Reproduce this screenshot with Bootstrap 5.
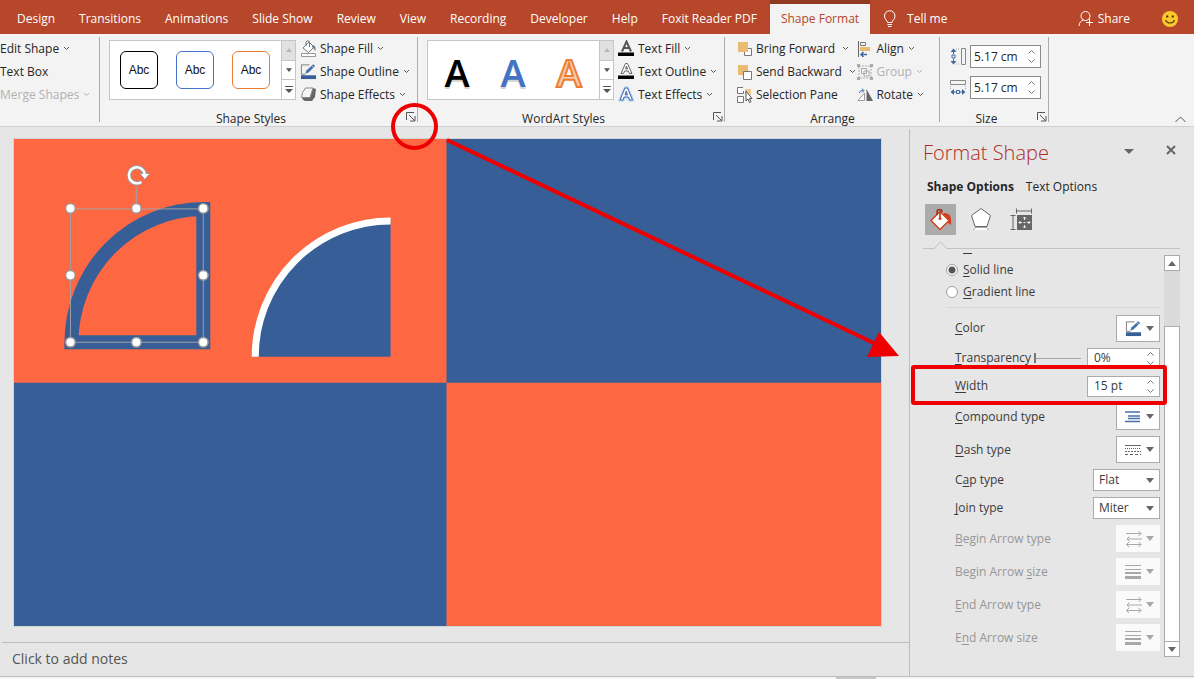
<!DOCTYPE html>
<html lang="en">
<head>
<meta charset="utf-8">
<meta name="viewport" content="width=device-width, initial-scale=1">
<title>Presentation editor</title>
<link href="https://cdn.jsdelivr.net/npm/bootstrap@5.3.0/dist/css/bootstrap.min.css" rel="stylesheet">
<script src="https://cdn.jsdelivr.net/npm/bootstrap@5.3.0/dist/js/bootstrap.bundle.min.js" defer></script>
<style>
:root { --brand: #b7472a; --ribbon: #f3f3f3; --canvas: #e6e6e6; --slide-blue: #375e97; --mark-red: #ee0000; }
body { font: 12px/16px "Open Sans", "Noto Sans", sans-serif; color: #262626; background: var(--canvas); overflow-x: hidden; }
button, input, select { font: inherit; color: inherit; }
button { background: none; border: 0; padding: 0; }
svg { display: block; flex: none; }
u { text-underline-offset: 2px; }

.tabbar { background: var(--brand); height: 34px; padding-left: 17px; }
.tabbar a, .tabbar > button { color: #fff; text-decoration: none; white-space: nowrap; padding-top: 3px; }
.tabs { gap: 24px; }
.tabs .current { background: var(--ribbon); color: var(--brand); height: 34px; border-top: 4px solid #923922; padding: 7px 11px 0; margin: 0 -9px 0 -11px; }

.ribbon { background: var(--ribbon); height: 93px; border-bottom: 1px solid #d2d0ce; position: relative; }
.group { position: relative; padding-top: 3px; }
.group::after { content: ""; position: absolute; right: 0; top: 3px; bottom: 4px; border-right: 1px solid #acacac; }
.g-insert { width: 100px; }
.g-shape { width: 318px; }
.g-word { width: 307px; }
.g-arrange { width: 215px; }
.g-size { width: 109px; }
.with-gallery { padding-left: 9px; }
.cmd { display: flex; align-items: center; height: 23px; gap: 3px; white-space: nowrap; }
.cmd svg:last-child { color: #555; }
.cmd .chev { margin-left: 1px; }
.cmd:disabled, .cmd:disabled svg:last-child { color: #b1b1b1; }
.caption { height: 22px; padding-top: 5px; text-align: center; }
.launch { position: absolute; right: 2px; bottom: 4px; }
.gallery { background: #fff; border: 1px solid #c6c6c6; width: 187px; height: 60px; margin-top: 3px; }
.gallery .items { gap: 18px; padding-left: 10px; }
.gallery .steps { width: 14px; border-left: 1px solid #c6c6c6; color: #555; }
.gallery .steps button { flex: 1; display: grid; place-items: center; }
.gallery .steps button + button { border-top: 1px solid #c6c6c6; }
.gallery .steps button:disabled { background: #e1e1e1; color: #b5b5b5; }
.swatch { width: 38px; height: 38px; border: 1px solid; border-radius: 6px; background: #fff; }
.swatch span { color: #111; font: 12px/34px "Liberation Sans", sans-serif; display: block; }
.letter { width: 38px; height: 58px; }
.letter svg { overflow: visible; }
.letter text { font-family: "Open Sans", sans-serif; font-size: 38px; font-weight: 600; text-anchor: middle; }
.spin { border: 1px solid #ababab; background: #fff; display: flex; align-items: center; }
.spin input { border: 0; background: none; min-width: 0; flex: 1; padding: 0; outline: 0; }
.size-rows { padding: 8px 0 7px 10px; gap: 8px; }
.g-size .spin { width: 71px; height: 23px; padding: 0 4px 0 3px; border-color: #8a8a8a; }
.circle-mark { position: absolute; right: -20px; top: 69px; width: 47px; height: 47px; border: 4px solid var(--mark-red); border-radius: 50%; pointer-events: none; z-index: 3; }
.collapse-btn { position: absolute; right: 8px; bottom: 3px; }

.workspace { position: relative; }
.editor { min-width: 0; }
.stage { padding: 11px 27px 15px 13px; }
.stage svg { width: 100%; height: auto; border: 1px solid #cdd5d5; }
.notes { border-top: 1px solid #bdbdbd; padding: 7px 10px; margin-left: 2px; font-size: 14px; line-height: 18px; min-height: 34px; color: #555; }
.pointer-mark { position: absolute; left: 0; top: 0; width: 100%; pointer-events: none; }

.pane { width: 285px; border-left: 1px solid #bdbdbd; padding: 0 14px 0 13px; margin-top: 2px; }
.pane h1 { font-size: 20px; line-height: 24px; font-weight: 300; color: #b02b24; margin: 0; }
.pane-tabs { gap: 12px; padding: 14px 4px 9px; }
.pane-tools { gap: 9px; height: 31px; padding-left: 2px; }
.pane-tools button { width: 31px; height: 31px; display: grid; place-items: center; }
.pane-tools .on { background: #ababab; }
.tick-line { margin-top: 4px; width: 100%; }
.options { padding-left: 32px; width: 237px; color: #3b3b3b; }
.cut-row { height: 2px; margin: 4px 0; overflow: hidden; padding-left: 8px; display: flex; align-items: flex-end; }
.pick { display: flex; align-items: center; gap: 5px; height: 22px; margin-left: -9px; }
.pick input { appearance: none; width: 12px; height: 12px; margin: 0; border: 1px solid #a0a0a0; border-radius: 50%; background: #fff; }
.pick input:checked { background: radial-gradient(circle, #555 0 3px, #fff 4px); }
.split { border-top: 1px solid #d6d6d6; margin: 4px 0 4px -8px; }
.opt { display: flex; align-items: center; justify-content: space-between; height: 33px; position: relative; }
.opt.tight { height: 28px; }
.opt.mid { height: 32px; }
.drop { width: 44px; height: 27px; border: 1px solid #ababab; background: #fff; display: flex; align-items: center; justify-content: space-between; padding: 0 5px 0 8px; color: #666; }
.faded { color: #969696; }
.faded .drop { border-color: #fafafa; background: #fafafa; color: #a8a8a8; }
.opt .spin { width: 73px; height: 21px; padding: 0 4px 0 6px; }
.opt select { appearance: none; height: 22px; border: 1px solid #ababab; border-radius: 0; padding: 0 20px 0 5px; width: 67px; line-height: 18px;
  background: #fff url("data:image/svg+xml,%3Csvg xmlns='http://www.w3.org/2000/svg' viewBox='0 0 8 5'%3E%3Cpath d='M0 0h8L4 5z' fill='%23666'/%3E%3C/svg%3E") no-repeat right 5px center / 8px 5px; }
.opt input[type=range] { appearance: none; background: linear-gradient(#a5a5a5, #a5a5a5) center / 100% 1px no-repeat; width: 47px; height: 11px; margin: 0 6px 0 auto; }
.opt input[type=range]::-webkit-slider-thumb { appearance: none; width: 2px; height: 10px; background: #777; }
.box-mark { position: absolute; left: -44px; right: -7px; top: -7px; bottom: -5px; border: 4px solid var(--mark-red); border-radius: 3px; pointer-events: none; z-index: 2; }
.scroller { width: 16px; margin-top: 6px; height: 402px; background: #dadada; }
.scroller button, .scroller div { border: 1px solid #ababab; background: #fff; }
.scroller button { height: 16px; display: grid; place-items: center; }
.scroller div { margin-top: 55px; flex: 1; border-bottom: 0; }
.status { height: 3px; border-top: 1px solid #bdbdbd; background: #f6f6f6; }
.status div { width: 40px; height: 2px; background: #c6c6c6; margin-left: 70%; }
</style>
</head>
<body class="d-flex flex-column min-vh-100">
<svg width="0" height="0" class="position-absolute" aria-hidden="true">
  <symbol id="chev" viewBox="0 0 7 5"><path d="M1 1l2.500 2.500L6 1" fill="none" stroke="currentColor"/></symbol>
  <symbol id="tri" viewBox="0 0 8 5"><path d="M0 0h8L4 5z" fill="currentColor"/></symbol>
  <symbol id="tri-up" viewBox="0 0 8 5"><path d="M0 5h8L4 0z" fill="currentColor"/></symbol>
  <symbol id="more" viewBox="0 0 8 8"><path d="M0 .5h8" stroke="currentColor"/><path d="M0 3h8L4 7z" fill="currentColor"/></symbol>
  <symbol id="updown" viewBox="0 0 9 15"><path d="M1.500 4.500l3-3 3 3M1.500 10.500l3 3 3-3" fill="none" stroke="#777"/></symbol>
  <symbol id="launch" viewBox="0 0 10 10"><path d="M.5 8V.5H8M3 3l5.500 5.500M9 4v5H4" fill="none" stroke="#555"/></symbol>
  <symbol id="pen" viewBox="0 0 18 17"><path d="M10 1.500H1.500v10h4" fill="none" stroke="#7a7a7a"/><path d="M5.500 11l1.300-3.500L14 .8l2 2L9 9.500z" fill="#4472a8"/><path d="M12.300 2.200l2.200 2.200" stroke="#fff" stroke-width=".7"/><path d="M1 12.500h16v4H1z" fill="#375e97"/></symbol>
  <symbol id="swap" viewBox="0 0 18 16"><path d="M1 2.500h15M13.500 0l2.500 2.500L13.500 5M17 8H2M4.500 5.500L2 8l2.500 2.500M1.500 13.500H16M4 11l-2.500 2.500L4 16M13.500 11l2.500 2.500-2.500 2.500" fill="none" stroke="currentColor"/></symbol>
  <symbol id="bars" viewBox="0 0 16 14"><path d="M0 .5h16M0 4.500h16" stroke="currentColor"/><path d="M0 8h16" stroke="currentColor" stroke-width="2"/><path d="M0 12.500h16" stroke="currentColor" stroke-width="3"/></symbol>
</svg>

<header class="tabbar d-flex align-items-center">
  <nav class="tabs d-flex align-items-center" aria-label="Ribbon tabs">
    <a href="#">Design</a><a href="#">Transitions</a><a href="#">Animations</a><a href="#">Slide Show</a><a href="#">Review</a><a href="#">View</a><a href="#">Recording</a><a href="#">Developer</a><a href="#">Help</a><a href="#">Foxit Reader PDF</a><a href="#" class="current" aria-current="page">Shape Format</a>
  </nav>
  <button class="d-flex align-items-center gap-2 ms-3 ps-1">
    <svg width="18" height="18" viewBox="0 0 18 18" fill="none" stroke="#fff"><path d="M6.500 12.500c0-2-3-3-3-6.500a5 5 0 0 1 10.500 0c0 3.500-3 4.500-3 6.500zM6.500 14.500H11M7 16.500h3.500"/></svg>Tell me</button>
  <button class="d-flex align-items-center gap-1 ms-auto">
    <svg width="16" height="17" viewBox="0 0 16 17" fill="none" stroke="#fff"><circle cx="7.500" cy="6" r="4.500"/><path d="M1 16c.3-3.500 2-5.500 4.500-6M11.500 9v7M8 12.500h7"/></svg>Share</button>
  <button aria-label="Feedback" class="ms-4 me-3 ps-2">
    <svg width="16" height="16" viewBox="0 0 16 16"><circle cx="8" cy="8" r="8" fill="#fcc82e"/><circle cx="5.200" cy="5.500" r="1.200" fill="#5b4300"/><circle cx="10.800" cy="5.500" r="1.200" fill="#5b4300"/><path d="M3.500 9c1.500 4 7.500 4 9 0" fill="none" stroke="#5b4300" stroke-width="1.200"/></svg></button>
</header>

<section class="ribbon d-flex" aria-label="Shape Format ribbon">
  <div class="group g-insert">
    <button class="cmd">Edit Shape <svg class="chev" width="7" height="5"><use href="#chev"/></svg></button>
    <button class="cmd">Text Box</button>
    <button class="cmd" disabled>Merge Shapes <svg class="chev" width="7" height="5"><use href="#chev"/></svg></button>
  </div>

  <div class="group g-shape">
    <div class="with-gallery d-flex">
      <div class="gallery d-flex">
        <div class="items d-flex flex-fill align-items-center">
          <button class="swatch" style="border-color:#000"><span>Abc</span></button>
          <button class="swatch" style="border-color:#4472c4"><span>Abc</span></button>
          <button class="swatch" style="border-color:#ed7d31"><span>Abc</span></button>
        </div>
        <div class="steps d-flex flex-column">
          <button disabled aria-label="Previous styles"><svg width="6" height="4"><use href="#tri-up"/></svg></button>
          <button aria-label="Next styles"><svg width="6" height="4"><use href="#tri"/></svg></button>
          <button aria-label="All styles"><svg width="8" height="8"><use href="#more"/></svg></button>
        </div>
      </div>
      <div class="ps-1">
        <button class="cmd"><svg width="17" height="17" viewBox="0 0 17 17"><path d="M3 8l6-6 5 5-5.500 5.500z" fill="#fff" stroke="#777"/><path d="M6 6V2.500a1.700 1.700 0 0 1 3.500 0V7" fill="none" stroke="#777"/><path d="M12 5c3 0 4 2 3.500 6-1.500-1-1.500-3-3.500-4z" fill="#6c8098"/><path d="M1.500 13.500h14v3h-14z" fill="#fff" stroke="#999"/></svg>Shape Fill <svg class="chev" width="7" height="5"><use href="#chev"/></svg></button>
        <button class="cmd"><svg width="17" height="17"><use href="#pen"/></svg>Shape Outline <svg class="chev" width="7" height="5"><use href="#chev"/></svg></button>
        <button class="cmd"><svg width="17" height="15" viewBox="0 0 17 15"><path d="M2 12l3 2h7l3-4 1-8-3-1z" fill="#666"/><path d="M5.500 1H13l-3 9.500H1.500l1-5z" fill="#f6f6f6" stroke="#888"/></svg>Shape Effects <svg class="chev" width="7" height="5"><use href="#chev"/></svg></button>
      </div>
    </div>
    <div class="caption pe-3">Shape Styles</div>
    <button class="launch" aria-label="Shape styles dialog"><svg width="10" height="10"><use href="#launch"/></svg></button>
    <div class="circle-mark"></div>
  </div>

  <div class="group g-word">
    <div class="with-gallery d-flex">
      <div class="gallery d-flex">
        <div class="items d-flex flex-fill align-items-center">
          <button class="letter" aria-label="Black fill"><svg width="38" height="58"><text x="19" y="48" fill="#aaa" opacity=".5">A</text><text x="19" y="46">A</text></svg></button>
          <button class="letter" aria-label="Blue fill"><svg width="38" height="58"><text x="19" y="48" fill="#aaa" opacity=".5">A</text><text x="19" y="46" fill="#4472c4">A</text></svg></button>
          <button class="letter" aria-label="Orange outline"><svg width="38" height="58"><text x="19" y="46" fill="#f8cbad" stroke="#ed7d31" stroke-width="2">A</text></svg></button>
        </div>
        <div class="steps d-flex flex-column">
          <button disabled aria-label="Previous WordArt"><svg width="6" height="4"><use href="#tri-up"/></svg></button>
          <button aria-label="Next WordArt"><svg width="6" height="4"><use href="#tri"/></svg></button>
          <button aria-label="All WordArt"><svg width="8" height="8"><use href="#more"/></svg></button>
        </div>
      </div>
      <div class="ps-1">
        <button class="cmd"><svg width="17" height="17" viewBox="0 0 17 17"><path d="M4 11.500L8.500 1.500l4.500 10M5.500 8h6" fill="none" stroke="#555" stroke-width="2"/><path d="M0 12.500h16v3.500H0z"/></svg>Text Fill <svg class="chev" width="7" height="5"><use href="#chev"/></svg></button>
        <button class="cmd"><svg width="17" height="17" viewBox="0 0 17 17"><path d="M3 10.500L7.500.5h2l4.500 10h-2.500l-1-2.500h-4l-1 2.500zM7.500 6h2l-1-3z" fill="#fff" stroke="#666"/><path d="M0 12.500h16v3.500H0z"/></svg>Text Outline <svg class="chev" width="7" height="5"><use href="#chev"/></svg></button>
        <button class="cmd"><svg width="17" height="17" viewBox="0 0 17 17"><path d="M2 14L7 2h2.500l5 12h-3l-1-3H6l-1 3zM7 9h2.500L8.300 5z" fill="#fff" stroke="#b8d1ee" stroke-width="3"/><path d="M2 14L7 2h2.500l5 12h-3l-1-3H6l-1 3zM7 9h2.500L8.300 5z" fill="#fff" stroke="#3f6ca8"/></svg>Text Effects <svg class="chev" width="7" height="5"><use href="#chev"/></svg></button>
      </div>
    </div>
    <div class="caption pe-3">WordArt Styles</div>
    <button class="launch" aria-label="WordArt dialog"><svg width="10" height="10"><use href="#launch"/></svg></button>
  </div>

  <div class="group g-arrange">
    <div class="d-flex justify-content-between ps-2 pe-3 ms-1">
      <div>
        <button class="cmd"><svg width="16" height="16" viewBox="0 0 16 16"><path d="M11 7.500h3.500v7h-7V11" fill="#fff" stroke="#777"/><path d="M1 1h10v10H1z" fill="#eabb72"/></svg>Bring Forward <svg class="ms-1" width="7" height="5"><use href="#chev"/></svg></button>
        <button class="cmd"><svg width="16" height="16" viewBox="0 0 16 16"><path d="M1 1h10v10H1z" fill="#eabb72"/><path d="M6.500 7.500h8v8h-8z" fill="#fff" stroke="#777"/></svg>Send Backward <svg class="ms-1" width="7" height="5"><use href="#chev"/></svg></button>
        <button class="cmd"><svg width="16" height="16" viewBox="0 0 16 16"><path d="M6 .5H.5v6h6V4M.5 9.500h6v6h-6z" fill="#fff" stroke="#777"/><path d="M8 2h6v6H8z" fill="#f0c98f"/><path d="M9 4v10l2-2 1.500 3.500 1.500-.8L12.500 11.500H15z" fill="#fff" stroke="#555"/></svg>Selection Pane</button>
      </div>
      <div>
        <button class="cmd"><svg width="16" height="16" viewBox="0 0 16 16" fill="none"><path d="M1.500 0v16" stroke="#666"/><path d="M3.500 1.500h5v3h-5z" stroke="#777"/><path d="M3 6h10v4H3z" fill="#eabb72"/><path d="M10 13.500H4M6.500 11L4 13.500 6.500 16" stroke="#3d6aa5" stroke-width="1.500"/></svg>Align <svg class="chev" width="7" height="5"><use href="#chev"/></svg></button>
        <button class="cmd" disabled><svg width="16" height="16" viewBox="0 0 16 16" fill="none" stroke="#aaa"><path d="M2 2h12v12H2z" stroke-dasharray="2 1"/><path d="M4.500 4.500h5v5h-5zM7 7h5v5H7z"/><path d="M0 0h3v3H0zM13 0h3v3h-3zM0 13h3v3H0zM13 13h3v3h-3z" fill="#aaa" stroke="none"/></svg>Group <svg class="chev" width="7" height="5"><use href="#chev"/></svg></button>
        <button class="cmd"><svg width="16" height="14" viewBox="0 0 16 14"><path d="M7.500 5v7.500H1z" fill="#fff" stroke="#999"/><path d="M9.500 1v12H16z" fill="#666"/><path d="M2.500 5c0-2 1.500-2.500 4-2.500M5 .5l2 2-2 2" fill="none" stroke="#3d6aa5"/></svg>Rotate <svg class="chev" width="7" height="5"><use href="#chev"/></svg></button>
      </div>
    </div>
    <div class="caption">Arrange</div>
  </div>

  <div class="group g-size">
    <div class="size-rows d-flex flex-column">
      <div class="d-flex align-items-center gap-1">
        <svg width="16" height="17" viewBox="0 0 16 17" fill="none"><path d="M11.500.5h4v16h-4z" stroke="#888"/><path d="M6 1h4M6 16h4" stroke="#aaa" stroke-dasharray="1 1"/><path d="M2 7h3v3H2zM3.500 2v4M3.500 11v4" stroke="#3d6aa5"/><path d="M.5 4l3-3.500 3 3.500zM.5 13l3 3.500 3-3.500z" fill="#3d6aa5"/></svg>
        <div class="spin"><input aria-label="Shape height" value="5.17 cm"><svg width="9" height="15"><use href="#updown"/></svg></div>
      </div>
      <div class="d-flex align-items-center gap-1">
        <svg width="16" height="17" viewBox="0 0 16 17" fill="none"><path d="M.5 1.500h15v4H.5z" stroke="#888"/><path d="M.5 7v4M15.500 7v4" stroke="#aaa" stroke-dasharray="1 1"/><path d="M6.500 11.500h3v3h-3zM2 13h4M10 13h4" stroke="#3d6aa5"/><path d="M4 10l-3.500 3L4 16zM12 10l3.500 3L12 16z" fill="#3d6aa5"/></svg>
        <div class="spin"><input aria-label="Shape width" value="5.17 cm"><svg width="9" height="15"><use href="#updown"/></svg></div>
      </div>
    </div>
    <div class="caption pe-3">Size</div>
    <button class="launch" aria-label="Size dialog"><svg width="10" height="10"><use href="#launch"/></svg></button>
  </div>
  <button class="collapse-btn" aria-label="Collapse ribbon"><svg width="11" height="7" viewBox="0 0 11 7"><path d="M.5 6l5-5 5 5" fill="none" stroke="#555"/></svg></button>
</section>

<main class="workspace d-flex flex-grow-1">
  <div class="editor d-flex flex-column flex-grow-1">
    <div class="stage flex-grow-1">
      <svg viewBox="0 0 868 488" role="img" aria-label="Slide with four coloured quarters and two quarter circles">
        <path d="M0 0h868v488H0z" fill="#fd6843"/>
        <path d="M433 0h435v244H433zM0 244h433v244H0z" fill="#375e97"/>
        <path d="M57.500 203.500A132.500 134 0 0 1 189.500 70v133.500z" fill="none" stroke="#375e97" stroke-width="14"/>
        <path d="M242 218A135 135 0 0 1 377 83v135z" fill="#375e97"/>
        <path d="M241.500 218A135.500 136 0 0 1 377 82" fill="none" stroke="#fff" stroke-width="7"/>
        <path d="M56.500 70h133v133.500h-133zM122.500 70V48" fill="none" stroke="#a3a3a3"/>
        <g fill="#fff" stroke="#999" stroke-width="1.500">
          <circle cx="56.500" cy="69.500" r="4.800"/><circle cx="122.500" cy="69.500" r="4.800"/><circle cx="189.500" cy="69.500" r="4.800"/>
          <circle cx="56.500" cy="136.500" r="4.800"/><circle cx="189.500" cy="136.500" r="4.800"/>
          <circle cx="56.500" cy="203.500" r="4.800"/><circle cx="122.500" cy="203.500" r="4.800"/><circle cx="189.500" cy="203.500" r="4.800"/>
        </g>
        <g fill="none"><path d="M127.500 43A8 8 0 1 1 131 36" stroke="#999" stroke-width="4.500"/><path d="M126 34.500h10l-5 6z" fill="#fff" stroke="#999"/><path d="M127.500 43A8 8 0 1 1 131 36" stroke="#fff" stroke-width="2.500"/></g>
      </svg>
    </div>
    <div class="notes">Click to add notes</div>
  </div>

  <aside class="pane">
    <div class="d-flex align-items-start pt-2 pe-1">
      <h1 class="pt-1">Format Shape</h1>
      <button class="ms-auto pt-2 mt-1" aria-label="Pane options"><svg width="10" height="5" viewBox="0 0 10 5"><path d="M0 0h10L5 5z" fill="#666"/></svg></button>
      <button class="ms-4 ps-2 pt-2" aria-label="Close pane"><svg width="10" height="10" viewBox="0 0 10 10"><path d="M1 1l8 8M9 1L1 9" stroke="#666" stroke-width="2"/></svg></button>
    </div>
    <div class="pane-tabs d-flex">
      <button class="fw-bold">Shape Options</button>
      <button>Text Options</button>
    </div>
    <div class="pane-tools d-flex">
      <button class="on" aria-label="Fill and line"><svg width="26" height="24" viewBox="0 0 26 24"><path d="M16 5c6 0 8 4 7 12l-3-2c0-4-1-6-5-7z" fill="#d2401f"/><path d="M12 3.500l9 9-9 9-9-9z" fill="#fff" stroke="#d2401f" stroke-width="1.500"/><path d="M9 7V4a2.500 2.500 0 0 1 5 0M12 4v6" fill="none" stroke="#a3301a" stroke-width="1.500"/><circle cx="12" cy="10.500" r="1.500" fill="#d2401f"/></svg></button>
      <button aria-label="Effects"><svg width="24" height="25" viewBox="0 0 24 25"><path d="M12 1.500l9.500 7L18 19.500H6L2.500 8.500z" fill="#fff" stroke="#666"/><path d="M6 20h12" stroke="#666" stroke-width="2"/><path d="M4.500 23l2-2.500h11l2 2.500" fill="#fff" stroke="#aaa"/></svg></button>
      <button aria-label="Size and properties"><svg width="22" height="23" viewBox="0 0 22 23" fill="none"><path d="M7 3h14M6.500 .5v5M21.500 .5v5M3 7v15M.5 7.500h5M.5 21.500h5" stroke="#666"/><path d="M7 7h15v15H7z" fill="#666"/><path d="M14.500 9v3M14.500 17v3M9 14.500h3M17 14.500h3M13 10.500l1.500-1.500 1.500 1.500M13 18.500l1.500 1.500 1.500-1.500M10.500 13L9 14.500l1.500 1.500M18.500 13l1.500 1.500-1.500 1.500M13.500 14.500h2" stroke="#fff" stroke-width=".9"/></svg></button>
    </div>
    <svg class="tick-line" height="10" viewBox="0 0 257 10" preserveAspectRatio="xMinYMin"><path d="M0 9.500h11.500l6-7 6 7H257" fill="none" stroke="#c3c3c3"/></svg>
    <div class="d-flex">
      <form class="options">
        <div class="cut-row"><input class="visually-hidden" type="radio" name="line" id="ln"><label for="ln"><u>N</u>o line</label></div>
        <div class="pick"><input type="radio" name="line" id="ls" checked><label for="ls"><u>S</u>olid line</label></div>
        <div class="pick"><input type="radio" name="line" id="lg"><label for="lg"><u>G</u>radient line</label></div>
        <div class="split"></div>
        <div class="opt mid"><span><u>C</u>olor</span><button type="button" class="drop" aria-label="Color"><svg width="17" height="17"><use href="#pen"/></svg><svg width="8" height="5"><use href="#tri"/></svg></button></div>
        <div class="opt tight"><label for="tr"><u>T</u>ransparency</label><input type="range" id="tr" value="0"><div class="spin"><input aria-label="Transparency percent" value="0%"><svg width="9" height="15"><use href="#updown"/></svg></div></div>
        <div class="opt tight"><label for="wd"><u>W</u>idth</label><div class="spin"><input id="wd" value="15 pt"><svg width="9" height="15"><use href="#updown"/></svg></div><div class="box-mark"></div></div>
        <div class="opt"><span><u>C</u>ompound type</span><button type="button" class="drop" aria-label="Compound type"><svg width="16" height="12" viewBox="0 0 16 12"><path d="M0 1h15M3 5h12M3 7.500h12M0 10.500h15" stroke="#4472a8" stroke-width="1.500"/></svg><svg width="8" height="5"><use href="#tri"/></svg></button></div>
        <div class="opt"><span><u>D</u>ash type</span><button type="button" class="drop" aria-label="Dash type"><svg width="16" height="12" viewBox="0 0 16 12" stroke="#666"><path d="M0 1.500h16"/><path d="M0 4.500h16" stroke-dasharray="1 1"/><path d="M0 7.500h16" stroke-dasharray="2 1"/><path d="M0 10.500h16" stroke-dasharray="3 2"/></svg><svg width="8" height="5"><use href="#tri"/></svg></button></div>
        <div class="opt tight"><label for="cp">C<u>a</u>p type</label><select id="cp"><option>Flat</option><option>Round</option><option>Square</option></select></div>
        <div class="opt tight"><label for="jn"><u>J</u>oin type</label><select id="jn"><option>Miter</option><option>Round</option><option>Bevel</option></select></div>
        <div class="opt faded"><span><u>B</u>egin Arrow type</span><button type="button" class="drop" disabled aria-label="Begin arrow type"><svg width="18" height="16"><use href="#swap"/></svg><svg width="8" height="5"><use href="#tri"/></svg></button></div>
        <div class="opt faded"><span>Begin Arrow <u>s</u>ize</span><button type="button" class="drop" disabled aria-label="Begin arrow size"><svg width="16" height="14"><use href="#bars"/></svg><svg width="8" height="5"><use href="#tri"/></svg></button></div>
        <div class="opt faded"><span><u>E</u>nd Arrow type</span><button type="button" class="drop" disabled aria-label="End arrow type"><svg width="18" height="16"><use href="#swap"/></svg><svg width="8" height="5"><use href="#tri"/></svg></button></div>
        <div class="opt faded"><span>E<u>n</u>d Arrow size</span><button type="button" class="drop" disabled aria-label="End arrow size"><svg width="16" height="14"><use href="#bars"/></svg><svg width="8" height="5"><use href="#tri"/></svg></button></div>
      </form>
      <div class="scroller d-flex flex-column ms-1">
        <button aria-label="Scroll up"><svg width="8" height="5" color="#666"><use href="#tri-up"/></svg></button>
        <div></div>
        <button aria-label="Scroll down"><svg width="8" height="5" color="#666"><use href="#tri"/></svg></button>
      </div>
    </div>
  </aside>

  <svg class="pointer-mark" viewBox="0 0 1194 300" aria-hidden="true"><path d="M447 13L878 218" stroke="#ee0000" stroke-width="4"/><path d="M879 205l20 24-32 1z" fill="#ee0000"/></svg>
</main>
<footer class="status"><div></div></footer>
</body>
</html>
